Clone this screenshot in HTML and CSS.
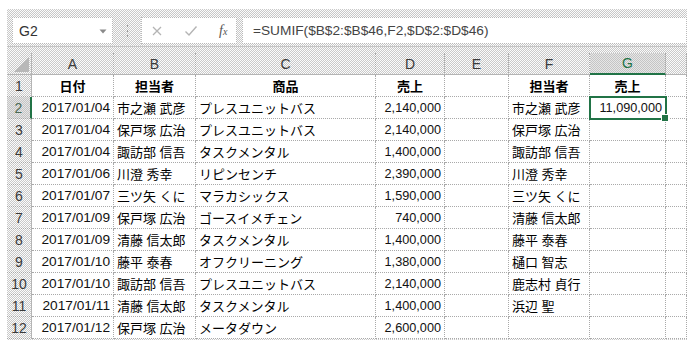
FILE: index.html
```html
<!DOCTYPE html>
<html lang="ja">
<head>
<meta charset="utf-8">
<link rel="stylesheet" href="styles.css">
</head>
<body>
<div class="frame">
  <div class="toolbar">
    <div class="namebox">
      <span class="nb-text">G2</span>
      <svg class="nb-arrow" width="8" height="5" viewBox="0 0 8 5"><path d="M0.5 0.5 H7.5 L4 4.5 Z" fill="#8a8a8a"/></svg>
    </div>
    <div class="grip">
      <svg width="3" height="13" viewBox="0 0 3 13"><rect x="1" y="1" width="1" height="2" fill="#9a9a9a"/><rect x="1" y="6" width="1" height="2" fill="#9a9a9a"/><rect x="1" y="11" width="1" height="2" fill="#9a9a9a"/></svg>
    </div>
    <div class="btns">
      <svg class="ic" width="12" height="12" viewBox="0 0 12 12"><path d="M2 2 L10 10 M10 2 L2 10" stroke="#b4b4b4" stroke-width="1.3" fill="none"/></svg>
      <svg class="ic" width="14" height="12" viewBox="0 0 14 12"><path d="M1.5 6.5 L5 10 L12.5 1.5" stroke="#b4b4b4" stroke-width="1.4" fill="none"/></svg>
      <span class="fx"><i>f</i><span class="fx-x">x</span></span>
    </div>
    <div class="fbox">=SUMIF($B$2:$B$46,F2,$D$2:$D$46)</div>
  </div>

  <div class="sheet">
    <div class="hd corner"><svg width="15" height="15" viewBox="0 0 15 15"><path d="M15 0 V15 H0 Z" fill="#b8b8b8"/></svg></div>
    <div class="hd col">A</div>
    <div class="hd col">B</div>
    <div class="hd col">C</div>
    <div class="hd col">D</div>
    <div class="hd col">E</div>
    <div class="hd col">F</div>
    <div class="hd col selcol">G</div>
    <div class="hd col"></div>

    <div class="hd row">1</div>
    <div class="c th">日付</div>
    <div class="c th">担当者</div>
    <div class="c th">商品</div>
    <div class="c th">売上</div>
    <div class="c"></div>
    <div class="c th">担当者</div>
    <div class="c th">売上</div>
    <div class="c"></div>

    <div class="hd row selrow">2</div>
    <div class="c date">2017/01/04</div>
    <div class="c jp">市之瀬 武彦</div>
    <div class="c jp">プレスユニットバス</div>
    <div class="c num">2,140,000</div>
    <div class="c"></div>
    <div class="c jp">市之瀬 武彦</div>
    <div class="c num sel">11,090,000</div>
    <div class="c"></div>

    <div class="hd row">3</div>
    <div class="c date">2017/01/04</div>
    <div class="c jp">保戸塚 広治</div>
    <div class="c jp">プレスユニットバス</div>
    <div class="c num">2,140,000</div>
    <div class="c"></div>
    <div class="c jp">保戸塚 広治</div>
    <div class="c"></div>
    <div class="c"></div>

    <div class="hd row">4</div>
    <div class="c date">2017/01/04</div>
    <div class="c jp">諏訪部 信吾</div>
    <div class="c jp">タスクメンタル</div>
    <div class="c num">1,400,000</div>
    <div class="c"></div>
    <div class="c jp">諏訪部 信吾</div>
    <div class="c"></div>
    <div class="c"></div>

    <div class="hd row">5</div>
    <div class="c date">2017/01/06</div>
    <div class="c jp">川澄 秀幸</div>
    <div class="c jp">リピンセンチ</div>
    <div class="c num">2,390,000</div>
    <div class="c"></div>
    <div class="c jp">川澄 秀幸</div>
    <div class="c"></div>
    <div class="c"></div>

    <div class="hd row">6</div>
    <div class="c date">2017/01/07</div>
    <div class="c jp">三ツ矢 くに</div>
    <div class="c jp">マラカシックス</div>
    <div class="c num">1,590,000</div>
    <div class="c"></div>
    <div class="c jp">三ツ矢 くに</div>
    <div class="c"></div>
    <div class="c"></div>

    <div class="hd row">7</div>
    <div class="c date">2017/01/09</div>
    <div class="c jp">保戸塚 広治</div>
    <div class="c jp">ゴースイメチェン</div>
    <div class="c num">740,000</div>
    <div class="c"></div>
    <div class="c jp">清藤 信太郎</div>
    <div class="c"></div>
    <div class="c"></div>

    <div class="hd row">8</div>
    <div class="c date">2017/01/09</div>
    <div class="c jp">清藤 信太郎</div>
    <div class="c jp">タスクメンタル</div>
    <div class="c num">1,400,000</div>
    <div class="c"></div>
    <div class="c jp">藤平 泰春</div>
    <div class="c"></div>
    <div class="c"></div>

    <div class="hd row">9</div>
    <div class="c date">2017/01/10</div>
    <div class="c jp">藤平 泰春</div>
    <div class="c jp">オフクリーニング</div>
    <div class="c num">1,380,000</div>
    <div class="c"></div>
    <div class="c jp">樋口 智志</div>
    <div class="c"></div>
    <div class="c"></div>

    <div class="hd row">10</div>
    <div class="c date">2017/01/10</div>
    <div class="c jp">諏訪部 信吾</div>
    <div class="c jp">プレスユニットバス</div>
    <div class="c num">2,140,000</div>
    <div class="c"></div>
    <div class="c jp">鹿志村 貞行</div>
    <div class="c"></div>
    <div class="c"></div>

    <div class="hd row">11</div>
    <div class="c date">2017/01/11</div>
    <div class="c jp">清藤 信太郎</div>
    <div class="c jp">タスクメンタル</div>
    <div class="c num">1,400,000</div>
    <div class="c"></div>
    <div class="c jp">浜辺 聖</div>
    <div class="c"></div>
    <div class="c"></div>

    <div class="hd row">12</div>
    <div class="c date">2017/01/12</div>
    <div class="c jp">保戸塚 広治</div>
    <div class="c jp">メータダウン</div>
    <div class="c num">2,600,000</div>
    <div class="c"></div>
    <div class="c"></div>
    <div class="c"></div>
    <div class="c"></div>
  </div>
</div>
</body>
</html>
```

FILE: styles.css
```css
* { box-sizing: border-box; }
html, body { margin: 0; padding: 0; background: #fff; }
body {
  font-family: "Liberation Sans", "Noto Sans CJK JP", sans-serif;
  color: #111;
}
.frame {
  margin: 9px 0 0 7px;
  width: 680px;
  background-color: #e2e2e2;
  background-image: repeating-conic-gradient(#c9c9c9 0 25%, #fbfbfb 0 50%);
  background-size: 2px 2px;
  padding-bottom: 1px;
}
.toolbar {
  display: flex;
  align-items: stretch;
  padding: 8px 0 2px 5px;
  border-bottom: 1px solid #c4c4c4;
}
.namebox {
  width: 101px;
  height: 27px;
  background: #fff;
  border: 1px dotted #b8b8b8;
  display: flex;
  align-items: center;
  justify-content: space-between;
  padding: 0 5px 0 6px;
  font-size: 14px;
  color: #333;
}
.nb-arrow { margin-top: 1px; }
.grip {
  width: 28px;
  display: flex;
  align-items: center;
  justify-content: center;
}
.btns {
  width: 96px;
  height: 27px;
  background: #fff;
  border: 1px dotted #b8b8b8;
  display: flex;
  align-items: center;
  padding-left: 9px;
  gap: 21px;
}
.fx {
  font-family: "Liberation Serif", serif;
  font-size: 14px;
  color: #555;
}
.fx i { font-style: italic; }
.fx-x { font-size: 10px; font-style: italic; }
.fbox {
  margin-left: 5px;
  flex: 1;
  height: 27px;
  background: #fff;
  border: 1px dotted #b8b8b8;
  display: flex;
  align-items: center;
  padding-left: 10px;
  font-size: 13.7px;
  color: #444;
}
.sheet {
  margin-top: 6px;
  display: grid;
  grid-template-columns: 25px 82px 82px 180px 69px 64px 81px 76px 21px;
  grid-auto-rows: 22px;
}
.hd {
  display: flex;
  align-items: center;
  justify-content: center;
  font-size: 14px;
  color: #3a3a3a;
  border-right: 1px dotted #a9a9a9;
  border-bottom: 1px dotted #a9a9a9;
}
.hd.col { border-bottom: 1px solid #b4b4b4; }
.hd.row { border-right: 1px solid #b4b4b4; }
.corner {
  align-items: flex-end;
  justify-content: flex-end;
  padding: 0 2px 2px 0;
  border-right: 1px solid #b4b4b4;
  border-bottom: 1px solid #b4b4b4;
}
.selcol {
  background-color: #d2d2d2;
  background-image: repeating-conic-gradient(#c4c4c4 0 25%, #e6e6e6 0 50%);
  background-size: 2px 2px;
  color: #217346;
  border-bottom: 2px solid #217346 !important;
}
.selrow {
  background-color: #d2d2d2;
  background-image: repeating-conic-gradient(#c4c4c4 0 25%, #e6e6e6 0 50%);
  background-size: 2px 2px;
  color: #4a6a55;
  border-right: 2px solid #217346 !important;
}
.c {
  background: #fff;
  border-right: 1px dotted #a9a9a9;
  border-bottom: 1px dotted #a9a9a9;
  display: flex;
  align-items: center;
  padding: 0 3px;
  white-space: nowrap;
  overflow: hidden;
  color: #111;
}
.th {
  justify-content: center;
  font-weight: bold;
  font-size: 13px;
  color: #000;
}
.date { justify-content: flex-end; font-size: 13.7px; }
.num { justify-content: flex-end; font-size: 12.7px; }
.jp { font-size: 13px; color: #000; }
.sel { position: relative; overflow: visible; }
.sel::after {
  content: "";
  position: absolute;
  left: -1px;
  top: -1px;
  right: -2px;
  bottom: -2px;
  border: 2px solid #217346;
}
.sel::before {
  content: "";
  position: absolute;
  right: -4px;
  bottom: -4px;
  width: 6px;
  height: 6px;
  background: #217346;
  border: 1px solid #fff;
  z-index: 2;
}
```
